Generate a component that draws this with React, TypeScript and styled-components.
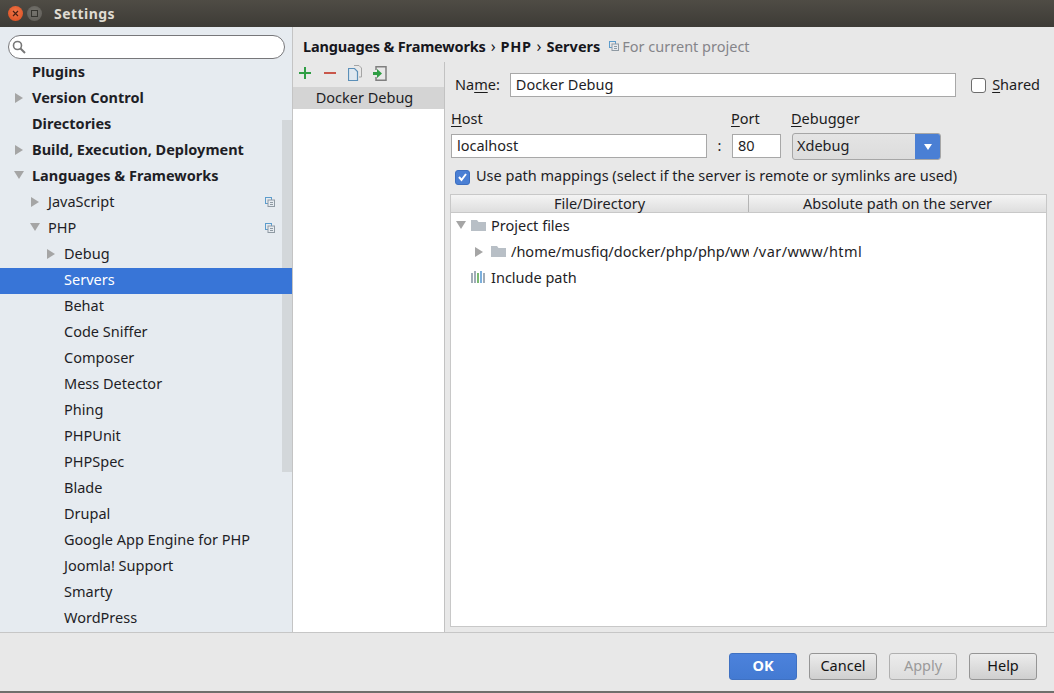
import React from 'react';
import styled, { createGlobalStyle } from 'styled-components';

const Global = createGlobalStyle`
  html, body { margin: 0; padding: 0; background: #e8e8e8; }
  body { font-family: "Noto Sans", "Open Sans", sans-serif; font-size: 14.5px; color: #1c1c1c; }
  * { box-sizing: border-box; }
`;

const Win = styled.div`
  width: 1054px; height: 693px; display: flex; flex-direction: column; overflow: hidden;
  background: #e8e8e8; border-bottom: 2px solid #6f6f6c;
`;
const TitleBar = styled.div`
  height: 27px; flex: none; display: flex; align-items: center; padding-left: 8px; gap: 4px;
  background: linear-gradient(#4f4c45, #3d3b36);
`;
const WinBtn = styled.div<{ $close?: boolean }>`
  width: 15px; height: 15px; border-radius: 50%; display: flex; align-items: center; justify-content: center;
  background: ${p => (p.$close ? 'radial-gradient(circle at 50% 40%, #f0774a, #d84a1c)' : 'radial-gradient(circle at 50% 40%, #76746e, #5c5a55)')};
`;
const Title = styled.div`
  margin-left: 8px; font-size: 14px; font-weight: 700; color: #dfdbd2; letter-spacing: .45px;
`;
const Body = styled.div`
  height: 606px; flex: none; display: flex; border-bottom: 1px solid #c6c6c6;
`;
const Sidebar = styled.div`
  width: 293px; flex: none; display: flex; flex-direction: column; background: #e6ebf0;
  border-right: 1px solid #c4c4c4; position: relative;
`;
const SearchWrap = styled.div`
  height: 40px; flex: none; padding: 8px 7px 0 8px;
`;
const Search = styled.div`
  height: 24px; background: #fff; border: 1px solid #77777a; border-radius: 12px; display: flex; align-items: center; padding-left: 3px;
`;
const Tree = styled.div`
  flex: 1; overflow: hidden; min-height: 0; position: relative;
`;
const TreeInner = styled.div`
  margin-top: -7px;
`;
const Row = styled.div<{ $sel?: boolean; $level: number; $bold?: boolean }>`
  height: 26px; display: flex; align-items: center; position: relative; padding-bottom: 4px;
  padding-left: ${p => 32 + p.$level * 16}px;
  font-weight: ${p => (p.$bold ? 700 : 400)};
  background: ${p => (p.$sel ? '#3875d7' : 'transparent')};
  color: ${p => (p.$sel ? '#fff' : '#1e1e26')};
`;
const Arrow = styled.span<{ $left: number }>`
  position: absolute; left: ${p => p.$left}px; top: 7px; display: flex;
`;
const ProjIcon = styled.span`
  position: absolute; right: 17px; top: 7px; display: flex;
`;
const Scroll = styled.div`
  position: absolute; right: 0; top: 93px; width: 10px; height: 352px; background: #d3d7da;
`;
const Main = styled.div`
  flex: 1; display: flex; flex-direction: column; min-width: 0;
`;
const Crumbs = styled.div`
  height: 33px; flex: none; padding: 5px 0 0 10px; display: flex; align-items: center; gap: 5px; font-weight: 700; color: #16161c;
`;
const CrumbFirst = styled.span`letter-spacing: -.18px;`;
const CrumbPhp = styled.span`letter-spacing: .6px;`;
const Sep = styled.span`font-weight: 400; font-size: 16px;`;
const Scope = styled.span`
  font-weight: 400; color: #85858a; margin-left: 4px; display: flex; align-items: center; gap: 3px;
`;
const Panels = styled.div`
  flex: 1; display: flex; min-height: 0;
`;
const Master = styled.div`
  width: 152px; flex: none; display: flex; flex-direction: column; border-right: 1px solid #c2c2c2; margin-top: 2px;
`;
const MasterBar = styled.div`
  height: 25px; flex: none; display: flex; align-items: center; padding: 0 0 3px 5px; gap: 11px;
`;
const MasterList = styled.div`
  flex: 1; background: #fff;
`;
const MasterItem = styled.div`
  height: 22px; background: #d4d4d4; display: flex; align-items: center; justify-content: center; padding: 0 8px 2px 0; color: #1e1e26;
`;
const Detail = styled.div`
  flex: 1; min-width: 0; padding: 13px 7px 5px 5px; display: flex; flex-direction: column;
`;
const NameRow = styled.div`
  height: 24px; display: flex; align-items: center; padding-left: 5px;
`;
const FieldText = styled.span`margin-bottom: 2px;`;
const U = styled.span`text-decoration: underline; text-underline-offset: 2px;`;
const Input = styled.div<{ $w?: number; $col?: number }>`
  height: 24px; background: #fff; border: 1px solid #a8a8a8; display: flex; align-items: center; padding: 0 0 2px 5px;
  ${p => (p.$w ? `width: ${p.$w}px; flex: none;` : 'flex: 1;')} color: #1e1e26;
  ${p => (p.$col ? `grid-column: ${p.$col}; grid-row: 2; align-self: start; margin-top: 1px;` : '')}
`;
const NameInput = styled(Input)`
  margin-left: 10px;
`;
const Shared = styled.div`
  display: flex; align-items: center; gap: 6px; margin-left: 15px; margin-right: 7px;
`;
const Check = styled.div`
  width: 15px; height: 15px; background: #fff; border: 1px solid #6d6d6d; border-radius: 3px;
`;
const CheckOn = styled.div`
  width: 15px; height: 15px; background: #4a7fd4; border: 1px solid #3d6fc0; border-radius: 3px; display: flex; align-items: center; justify-content: center; margin-top: 4px;
`;
const ConnGrid = styled.div`
  display: grid; grid-template-columns: 256px 25px 49px 10px 150px; grid-template-rows: 27px 27px; margin: 9px 0 0 1px; align-items: center;
`;
const Label = styled.div<{ $col: number; $nudge?: boolean }>`
  grid-column: ${p => p.$col}; grid-row: 1; padding-bottom: 4px;
  ${p => (p.$nudge ? 'margin-left: -1px;' : '')}
`;
const Colon = styled.div`
  grid-column: 2; grid-row: 2; text-align: center; padding-bottom: 3px;
`;
const Combo = styled.div`
  grid-column: 5; grid-row: 2; height: 27px; display: flex; border: 1px solid #a6a6a6; border-radius: 3px; overflow: hidden;
  background: linear-gradient(#e4e4e4, #dcdcdc); margin-left: 1px;
`;
const ComboText = styled.div`
  flex: 1; display: flex; align-items: center; padding: 0 0 3px 4px; color: #1e1e26;
`;
const ComboArrow = styled.div`
  width: 25px; background: #4a7fd4; display: flex; align-items: center; justify-content: center;
`;
const Mapping = styled.div`
  display: flex; align-items: center; gap: 6px; height: 24px; margin: 3px 0 0 5px; color: #1e1e26;
`;
const Table = styled.div`
  flex: 1; margin-top: 7px; border: 1px solid #c8c8c8; background: #fff; display: flex; flex-direction: column;
`;
const Head = styled.div`
  height: 18px; flex: none; display: flex; background: linear-gradient(#f4f4f4, #dedede); border-bottom: 1px solid #c8c8c8;
`;
const HeadCell = styled.div<{ $w?: number }>`
  ${p => (p.$w ? `width: ${p.$w}px; flex: none; border-right: 1px solid #b4b4b4;` : 'flex: 1;')}
  text-align: center; line-height: 17px; color: #1e1e26; white-space: nowrap;
`;
const TRow = styled.div<{ $indent: number }>`
  height: 26px; display: flex; align-items: center; white-space: nowrap; padding: 0 0 2px ${p => p.$indent}px; position: relative; color: #1e1e26;
`;
const TArrow = styled.span<{ $left: number }>`
  position: absolute; left: ${p => p.$left}px; top: 8px; display: flex;
`;
const TIcon = styled.span`
  display: flex; margin-right: 5px;
`;
const Clip = styled.span`
  width: 238px; overflow: hidden; flex: none;
`;
const Abs = styled.span`
  margin-left: 4px; letter-spacing: .45px;
`;
const Rows = styled.div`
  padding-top: 0;
`;
const Footer = styled.div`
  flex: 1; display: flex; justify-content: flex-end; gap: 12px; padding: 20px 17px 0 0;
`;
const Btn = styled.div<{ $kind?: 'ok' | 'off' }>`
  width: 68px; height: 27px; border-radius: 3px; display: flex; align-items: center; justify-content: center; padding-bottom: 3px;
  border: 1px solid ${p => (p.$kind === 'ok' ? '#3f71c2' : p.$kind === 'off' ? '#b0b0b0' : '#959595')};
  background: ${p => (p.$kind === 'ok' ? 'linear-gradient(#4c82dc, #437ad2)' : p.$kind === 'off' ? 'linear-gradient(#ececec, #dcdcdc)' : 'linear-gradient(#ececec, #cfcfcf)')};
  color: ${p => (p.$kind === 'ok' ? '#fff' : p.$kind === 'off' ? '#9a9a9a' : '#141414')};
  font-weight: ${p => (p.$kind === 'ok' ? 700 : 400)};
`;

const Right = ({ c = '#a5a5a5' }: { c?: string }) => (
  <svg width="8" height="10" viewBox="0 0 8 10"><path d="M0 0l8 5-8 5z" fill={c} /></svg>
);
const Down = ({ c = '#a5a5a5' }: { c?: string }) => (
  <svg width="10" height="8" viewBox="0 0 10 8"><path d="M0 0h10L5 8z" fill={c} /></svg>
);
const Copy = () => (
  <svg width="10" height="10" viewBox="0 0 10 10" fill="none">
    <rect x=".5" y=".5" width="6" height="6" stroke="#5c9ccc" />
    <rect x="3" y="3" width="6.5" height="6.5" fill="#e6ebf0" stroke="#8f9aa3" />
    <path d="M5 5.5h3M5 7.5h3" stroke="#8f9aa3" />
  </svg>
);
const Folder = () => (
  <svg width="15" height="12" viewBox="0 0 15 12"><path d="M0 1h6l1.5 2H15v9H0z" fill="#b8bfc6" /></svg>
);

const tree: { t: string; l: number; b?: boolean; a?: 'r' | 'd'; p?: boolean; s?: boolean }[] = [
  { t: 'Plugins', l: 0, b: true },
  { t: 'Version Control', l: 0, b: true, a: 'r' },
  { t: 'Directories', l: 0, b: true },
  { t: 'Build, Execution, Deployment', l: 0, b: true, a: 'r' },
  { t: 'Languages & Frameworks', l: 0, b: true, a: 'd' },
  { t: 'JavaScript', l: 1, a: 'r', p: true },
  { t: 'PHP', l: 1, a: 'd', p: true },
  { t: 'Debug', l: 2, a: 'r' },
  { t: 'Servers', l: 2, s: true },
  { t: 'Behat', l: 2 },
  { t: 'Code Sniffer', l: 2 },
  { t: 'Composer', l: 2 },
  { t: 'Mess Detector', l: 2 },
  { t: 'Phing', l: 2 },
  { t: 'PHPUnit', l: 2 },
  { t: 'PHPSpec', l: 2 },
  { t: 'Blade', l: 2 },
  { t: 'Drupal', l: 2 },
  { t: 'Google App Engine for PHP', l: 2 },
  { t: 'Joomla! Support', l: 2 },
  { t: 'Smarty', l: 2 },
  { t: 'WordPress', l: 2 },
];

export default function App() {
  return (
    <Win>
      <Global />
      <TitleBar>
        <WinBtn $close>
          <svg width="7" height="7" viewBox="0 0 7 7"><path d="M1 1l5 5M6 1L1 6" stroke="#4a2012" strokeWidth="1.2" /></svg>
        </WinBtn>
        <WinBtn>
          <svg width="7" height="7" viewBox="0 0 7 7"><rect x=".5" y=".5" width="6" height="6" fill="none" stroke="#35342f" /></svg>
        </WinBtn>
        <Title>Settings</Title>
      </TitleBar>
      <Body>
        <Sidebar>
          <Scroll />
          <SearchWrap>
            <Search>
              <svg width="14" height="14" viewBox="0 0 14 14" fill="none">
                <circle cx="5.5" cy="5.5" r="4" stroke="#777" strokeWidth="1.6" />
                <path d="M8.5 8.5l4.5 4.5" stroke="#777" strokeWidth="2" />
              </svg>
            </Search>
          </SearchWrap>
          <Tree>
            <TreeInner>
              {tree.map(r => (
                <Row key={r.t} $level={r.l} $bold={r.b} $sel={r.s}>
                  {r.a && (
                    <Arrow $left={r.a === 'd' ? 14 + r.l * 16 : 15 + r.l * 16}>
                      {r.a === 'r' ? <Right /> : <Down />}
                    </Arrow>
                  )}
                  {r.t}
                  {r.p && (
                    <ProjIcon>
                      <Copy />
                    </ProjIcon>
                  )}
                </Row>
              ))}
            </TreeInner>
          </Tree>
        </Sidebar>
        <Main>
          <Crumbs>
            <CrumbFirst>Languages &amp; Frameworks</CrumbFirst>
            <Sep>›</Sep>
            <CrumbPhp>PHP</CrumbPhp>
            <Sep>›</Sep>
            <span>Servers</span>
            <Scope>
              <Copy />
              For current project
            </Scope>
          </Crumbs>
          <Panels>
            <Master>
              <MasterBar>
                <svg width="14" height="14" viewBox="0 0 14 14"><path d="M7 1v12M1 7h12" stroke="#2f9e44" strokeWidth="2" /></svg>
                <svg width="14" height="14" viewBox="0 0 14 14"><path d="M1 7h12" stroke="#c9574b" strokeWidth="2" /></svg>
                <svg width="14" height="16" viewBox="0 0 14 16" fill="none">
                  <path d="M6 .5h5l2.5 2.5v9H11" stroke="#a5a5a5" />
                  <path d="M.5 3.5h6l3 3v9h-9z" fill="#dfe8f0" stroke="#5b8fb8" strokeWidth="1.2" />
                </svg>
                <svg width="14" height="15" viewBox="0 0 14 15" fill="none">
                  <path d="M3 4V.75h10v13.5H3V11" stroke="#7f7f7f" strokeWidth="1.5" />
                  <path d="M0 6h4V3l5 4.5L4 12V9H0z" fill="#2f9e44" />
                </svg>
              </MasterBar>
              <MasterList>
                <MasterItem>Docker Debug</MasterItem>
              </MasterList>
            </Master>
            <Detail>
              <NameRow>
                <FieldText>Na<U>m</U>e:</FieldText>
                <NameInput>Docker Debug</NameInput>
                <Shared>
                  <Check />
                  <FieldText><U>S</U>hared</FieldText>
                </Shared>
              </NameRow>
              <ConnGrid>
                <Label $col={1}><U>H</U>ost</Label>
                <Label $col={3} $nudge><U>P</U>ort</Label>
                <Label $col={5}><U>D</U>ebugger</Label>
                <Input $w={256} $col={1}>localhost</Input>
                <Colon>:</Colon>
                <Input $w={49} $col={3}>80</Input>
                <Combo>
                  <ComboText>Xdebug</ComboText>
                  <ComboArrow>
                    <svg width="8" height="6" viewBox="0 0 8 6"><path d="M0 0h8L4 6z" fill="#fff" /></svg>
                  </ComboArrow>
                </Combo>
              </ConnGrid>
              <Mapping>
                <CheckOn>
                  <svg width="11" height="10" viewBox="0 0 11 10" fill="none"><path d="M2 5l2.5 3L9 2" stroke="#fff" strokeWidth="2" /></svg>
                </CheckOn>
                Use path mappings (select if the server is remote or symlinks are used)
              </Mapping>
              <Table>
                <Head>
                  <HeadCell $w={298}>File/Directory</HeadCell>
                  <HeadCell>Absolute path on the server</HeadCell>
                </Head>
                <Rows>
                  <TRow $indent={20}>
                    <TArrow $left={5}><Down /></TArrow>
                    <TIcon><Folder /></TIcon>
                    Project files
                  </TRow>
                  <TRow $indent={40}>
                    <TArrow $left={24}><Right /></TArrow>
                    <TIcon><Folder /></TIcon>
                    <Clip>/home/musfiq/docker/php/php/www/public</Clip>
                    <Abs>/var/www/html</Abs>
                  </TRow>
                  <TRow $indent={20}>
                    <TIcon>
                      <svg width="15" height="14" viewBox="0 0 15 14">
                        <path d="M1 3v10" stroke="#8a98a6" strokeWidth="1.6" />
                        <path d="M4 1v12" stroke="#8a98a6" strokeWidth="1.6" />
                        <path d="M7 3v10" stroke="#5aa84f" strokeWidth="1.6" />
                        <path d="M10 1v12" stroke="#5b9bd5" strokeWidth="1.6" />
                        <path d="M13 3v10" stroke="#8a98a6" strokeWidth="1.6" />
                      </svg>
                    </TIcon>
                    Include path
                  </TRow>
                </Rows>
              </Table>
            </Detail>
          </Panels>
        </Main>
      </Body>
      <Footer>
        <Btn $kind="ok">OK</Btn>
        <Btn>Cancel</Btn>
        <Btn $kind="off">Apply</Btn>
        <Btn>Help</Btn>
      </Footer>
    </Win>
  );
}
